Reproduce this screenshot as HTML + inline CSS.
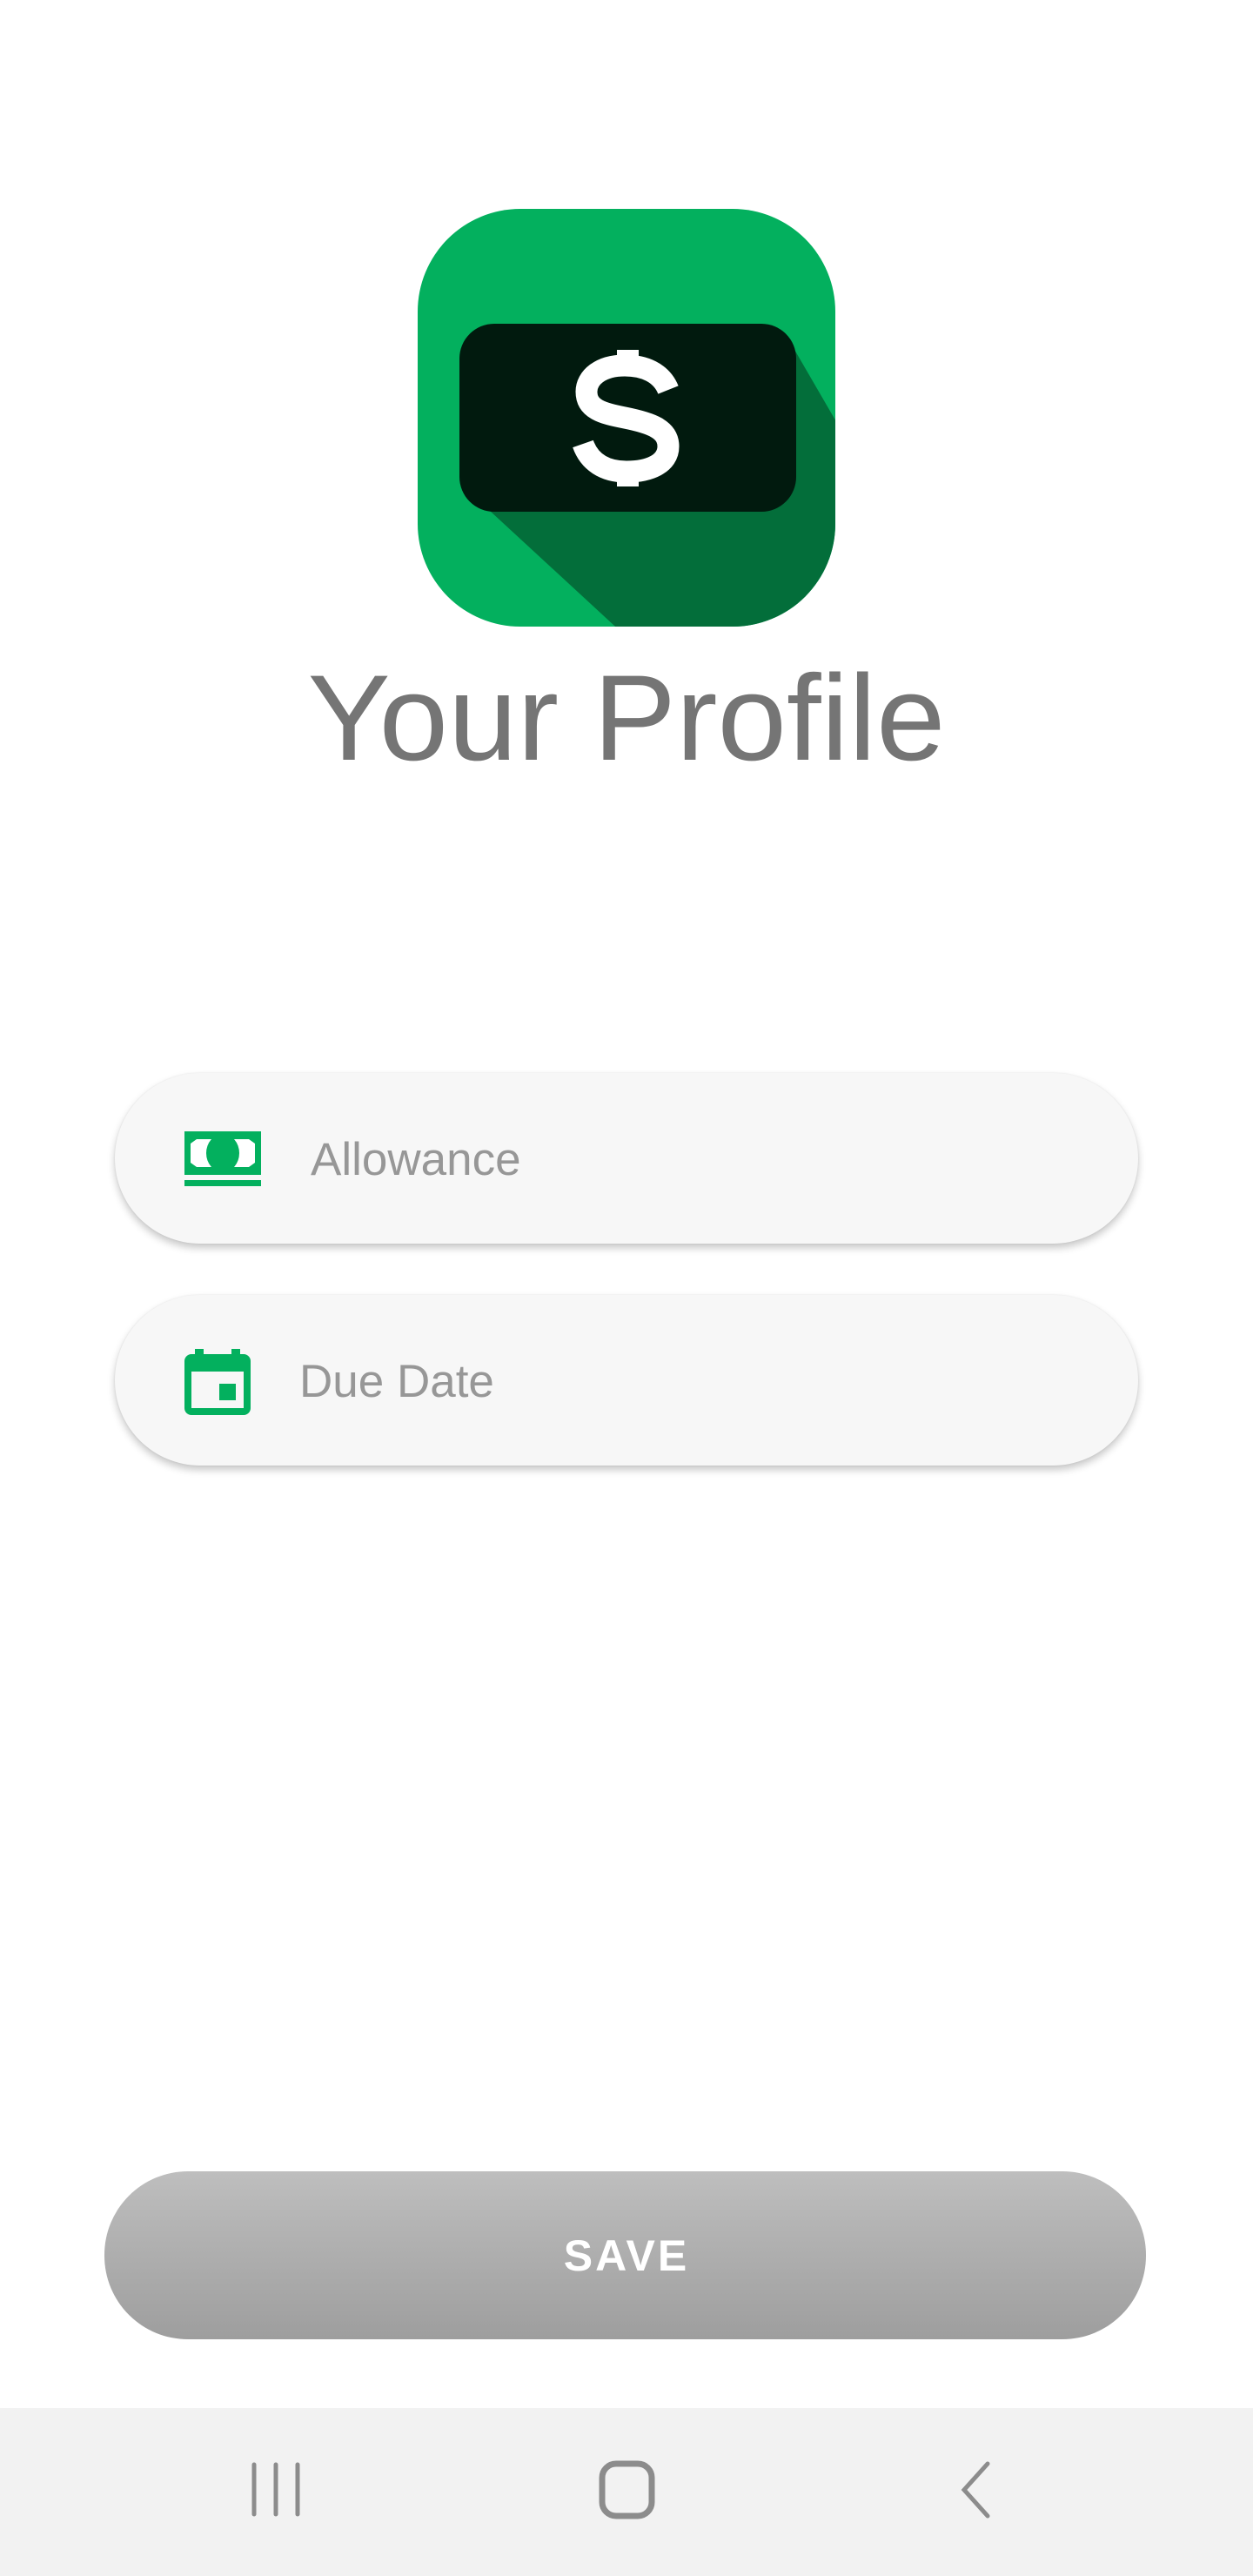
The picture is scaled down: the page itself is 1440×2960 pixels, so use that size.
<!DOCTYPE html>
<html><head><meta charset="utf-8"><style>
html,body{margin:0;padding:0;background:#fff;}
body{width:1440px;height:2960px;position:relative;overflow:hidden;font-family:"Liberation Sans",Roboto,sans-serif;}
.abs{position:absolute;}
.field{position:absolute;left:132px;width:1176px;height:196px;border-radius:98px;background:#f7f7f7;box-shadow:0 5px 9px rgba(0,0,0,0.22),0 0 2px rgba(0,0,0,0.08);}
.ph{position:absolute;font-size:53px;color:#979797;line-height:1;}
</style></head><body>
<svg class="abs" style="left:0;top:0" width="1440" height="760" viewBox="0 0 1440 760">
  <defs><clipPath id="c"><rect x="480" y="240" width="480" height="480" rx="118"/></clipPath></defs>
  <rect x="480" y="240" width="480" height="480" rx="118" fill="#03b05e"/>
  <g clip-path="url(#c)">
    <polygon points="550,575 912,400 970,500 970,730 718,730" fill="#036e3a"/>
  </g>
  <rect x="528" y="372" width="387" height="216" rx="40" fill="#011a0e"/>
  <rect x="709" y="402" width="25" height="24" fill="#fff"/>
  <rect x="709" y="536" width="25" height="23" fill="#fff"/>
  <path d="M768,448 C760,428 740,420 718,420 C690,420 674,434 674,450 C674,470 692,475 718,480 C748,486 768,493 768,513 C768,533 746,542 720,542 C694,542 677,530 670,510" stroke="#fff" stroke-width="25" fill="none"/>
</svg>
<svg class="abs" style="left:0;top:740px" width="1440" height="160"><text x="720" y="133" text-anchor="middle" font-family="Liberation Sans, sans-serif" font-size="140" fill="#757575" textLength="733" lengthAdjust="spacingAndGlyphs">Your Profile</text></svg>

<div class="field" style="top:1233px;"></div>
<svg class="abs" style="left:212px;top:1300px" width="88" height="64" viewBox="0 0 88 64">
  <rect x="0" y="0" width="88" height="50" fill="#03b05e"/>
  <rect x="0" y="56" width="88" height="7" fill="#03b05e"/>
  <path d="M7,14 L14,9 L74,9 L81,14 L81,36 L74,41 L14,41 L7,36 Z" fill="#fff"/>
  <ellipse cx="44" cy="25" rx="19" ry="22" fill="#03b05e"/>
</svg>
<div class="ph" style="left:357px;top:1306px;">Allowance</div>

<div class="field" style="top:1488px;"></div>
<svg class="abs" style="left:212px;top:1550px" width="76" height="76" viewBox="0 0 76 76">
  <rect x="12" y="0" width="10" height="10" fill="#03b05e"/>
  <rect x="54" y="0" width="10" height="10" fill="#03b05e"/>
  <rect x="0" y="6" width="76" height="70" rx="8" fill="#03b05e"/>
  <rect x="8" y="26" width="60" height="42" fill="#f7f7f7"/>
  <rect x="40" y="40" width="19" height="19" fill="#03b05e"/>
</svg>
<div class="ph" style="left:344px;top:1561px;">Due Date</div>

<div class="abs" style="left:120px;top:2495px;width:1197px;height:193px;border-radius:96px;background:linear-gradient(#bebebe,#9e9e9e);"></div>
<div class="abs" style="left:0;width:1440px;top:2567px;text-align:center;color:#fff;font-weight:bold;font-size:50px;letter-spacing:3px;line-height:1;">SAVE</div>

<div class="abs" style="left:0;top:2767px;width:1440px;height:193px;background:#f2f2f2;"></div>
<svg class="abs" style="left:0;top:2767px" width="1440" height="193">
  <g stroke="#8c8c8c" stroke-width="5" stroke-linecap="round" fill="none">
    <line x1="292" y1="65" x2="292" y2="122"/>
    <line x1="317" y1="65" x2="317" y2="122"/>
    <line x1="342" y1="65" x2="342" y2="122"/>
    <rect x="692" y="64" width="57" height="60" rx="16" stroke-width="7"/>
    <polyline points="1135,64 1108,94 1135,124"/>
  </g>
</svg>
</body></html>
